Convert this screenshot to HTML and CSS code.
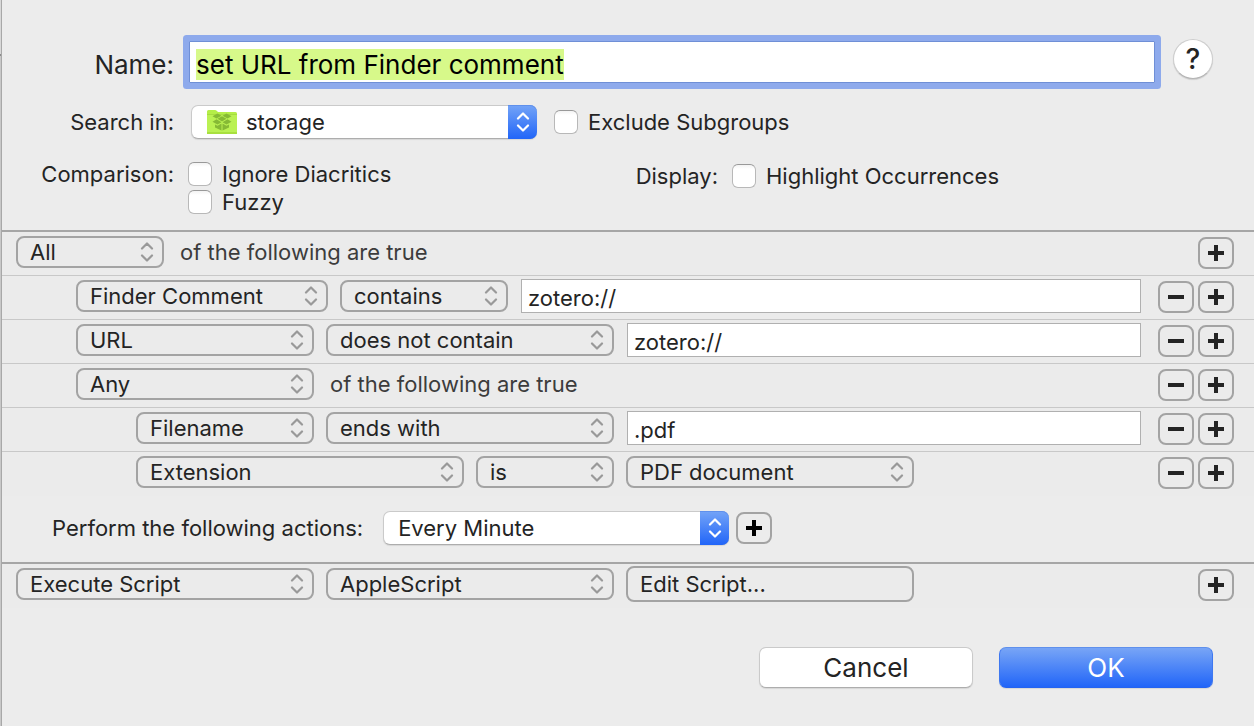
FILE: index.html
```html
<!DOCTYPE html>
<html lang="en">
<head>
<meta charset="utf-8">
<title>Smart Rule</title>
<link rel="stylesheet" href="styles.css">
</head>
<body>
<svg class="symbols" aria-hidden="true">
  <symbol id="arrows" viewBox="0 0 14 20"><path d="M2 6.500 7 1.500l5 5M2 13.500l5 5 5-5" fill="none" stroke="currentColor" stroke-width="2.200" stroke-linecap="round" stroke-linejoin="round"/></symbol>
  <symbol id="plus" viewBox="0 0 16 16"><path d="M6 0h4v6h6v4h-6v6H6v-6H0V6h6z" fill="currentColor"/></symbol>
  <symbol id="minus" viewBox="0 0 16 16"><path d="M0 6h16v4H0z" fill="currentColor"/></symbol>
</svg>
<form class="dialog">
  <section class="settings">
    <div class="line name-line">
      <label class="label label-large" for="name">Name:</label>
      <input class="name-input" id="name" type="text" value="set URL from Finder comment" autocomplete="off" spellcheck="false" autofocus>
      <button class="help" type="button" aria-label="Help">?</button>
    </div>
    <div class="line search-line">
      <label class="label" for="scope">Search in:</label>
      <div class="popup">
        <select class="popup-select has-icon" id="scope"><option>storage</option></select>
        <svg class="folder" viewBox="0 0 30 24" aria-hidden="true">
          <path d="M0 1.500Q0 0 1.500 0H8q1 0 1.700.7L11 2h17.500Q30 2 30 3.500V24H0z" fill="#b4ee48"/>
          <path d="M0 4h30v1H0z" fill="#a6dc40"/>
          <path d="M0 5h30v17H0z" fill="#baf153"/>
          <path d="M0 22h30v2H0z" fill="#a8e03f"/>
          <g fill="#86ba35">
            <path d="m10.500 3.500 4 2.200-5 2.800-4-2.300zM19.500 3.500l-4 2.200 5 2.800 4-2.300zM15 6.200l4.500 2.600L15 11.400l-4.500-2.600zM9.500 9.300l5 2.900-4 2.300-5-2.700zM20.500 9.300l-5 2.900 4 2.300 5-2.700z"/>
            <path d="m8 14.500 2.500 1.300 4-2.200v7L8 17.500zM22 14.500l-2.500 1.300-4-2.200v7l6.500-3.100z"/>
          </g>
        </svg>
        <span class="popup-cap"><svg class="arrows"><use href="#arrows"/></svg></span>
      </div>
      <label class="check"><input class="box" type="checkbox">Exclude Subgroups</label>
    </div>
    <div class="line options-line">
      <span class="label">Comparison:</span>
      <div class="options">
        <label class="check"><input class="box" type="checkbox">Ignore Diacritics</label>
        <label class="check"><input class="box" type="checkbox">Fuzzy</label>
      </div>
      <div class="display">
        <span class="display-label">Display:</span>
        <label class="check"><input class="box" type="checkbox">Highlight Occurrences</label>
      </div>
    </div>
  </section>

  <section class="rules" aria-label="Conditions">
    <div class="rule">
      <div class="select w-148"><select class="control" aria-label="Match"><option>All</option></select><svg class="arrows"><use href="#arrows"/></svg></div>
      <span class="note">of the following are true</span>
      <div class="buttons"><button class="square" type="button" aria-label="Add"><svg class="sign"><use href="#plus"/></svg></button></div>
    </div>
    <div class="rule level-1">
      <div class="select w-252"><select class="control" aria-label="Field"><option>Finder Comment</option></select><svg class="arrows"><use href="#arrows"/></svg></div>
      <div class="select w-168"><select class="control" aria-label="Operator"><option>contains</option></select><svg class="arrows"><use href="#arrows"/></svg></div>
      <input class="value" type="text" aria-label="Value" value="zotero://">
      <div class="buttons"><button class="square" type="button" aria-label="Remove"><svg class="sign"><use href="#minus"/></svg></button><button class="square" type="button" aria-label="Add"><svg class="sign"><use href="#plus"/></svg></button></div>
    </div>
    <div class="rule level-1">
      <div class="select w-238"><select class="control" aria-label="Field"><option>URL</option></select><svg class="arrows"><use href="#arrows"/></svg></div>
      <div class="select w-288"><select class="control" aria-label="Operator"><option>does not contain</option></select><svg class="arrows"><use href="#arrows"/></svg></div>
      <input class="value" type="text" aria-label="Value" value="zotero://">
      <div class="buttons"><button class="square" type="button" aria-label="Remove"><svg class="sign"><use href="#minus"/></svg></button><button class="square" type="button" aria-label="Add"><svg class="sign"><use href="#plus"/></svg></button></div>
    </div>
    <div class="rule level-1">
      <div class="select w-238"><select class="control" aria-label="Match"><option>Any</option></select><svg class="arrows"><use href="#arrows"/></svg></div>
      <span class="note">of the following are true</span>
      <div class="buttons"><button class="square" type="button" aria-label="Remove"><svg class="sign"><use href="#minus"/></svg></button><button class="square" type="button" aria-label="Add"><svg class="sign"><use href="#plus"/></svg></button></div>
    </div>
    <div class="rule level-2">
      <div class="select w-178"><select class="control" aria-label="Field"><option>Filename</option></select><svg class="arrows"><use href="#arrows"/></svg></div>
      <div class="select w-288"><select class="control" aria-label="Operator"><option>ends with</option></select><svg class="arrows"><use href="#arrows"/></svg></div>
      <input class="value" type="text" aria-label="Value" value=".pdf">
      <div class="buttons"><button class="square" type="button" aria-label="Remove"><svg class="sign"><use href="#minus"/></svg></button><button class="square" type="button" aria-label="Add"><svg class="sign"><use href="#plus"/></svg></button></div>
    </div>
    <div class="rule level-2">
      <div class="select w-328"><select class="control" aria-label="Field"><option>Extension</option></select><svg class="arrows"><use href="#arrows"/></svg></div>
      <div class="select w-138"><select class="control" aria-label="Operator"><option>is</option></select><svg class="arrows"><use href="#arrows"/></svg></div>
      <div class="select w-288"><select class="control" aria-label="Value"><option>PDF document</option></select><svg class="arrows"><use href="#arrows"/></svg></div>
      <div class="buttons"><button class="square" type="button" aria-label="Remove"><svg class="sign"><use href="#minus"/></svg></button><button class="square" type="button" aria-label="Add"><svg class="sign"><use href="#plus"/></svg></button></div>
    </div>
  </section>

  <div class="perform">
    <label class="perform-label" for="when">Perform the following actions:</label>
    <div class="popup">
      <select class="popup-select" id="when"><option>Every Minute</option></select>
      <span class="popup-cap"><svg class="arrows"><use href="#arrows"/></svg></span>
    </div>
    <button class="square square-dark" type="button" aria-label="Add trigger"><svg class="sign"><use href="#plus"/></svg></button>
  </div>

  <section class="rules" aria-label="Actions">
    <div class="rule">
      <div class="select w-298"><select class="control" aria-label="Action"><option>Execute Script</option></select><svg class="arrows"><use href="#arrows"/></svg></div>
      <div class="select w-288"><select class="control" aria-label="Script type"><option>AppleScript</option></select><svg class="arrows"><use href="#arrows"/></svg></div>
      <button class="edit w-288" type="button">Edit Script...</button>
      <div class="buttons"><button class="square" type="button" aria-label="Add"><svg class="sign"><use href="#plus"/></svg></button></div>
    </div>
  </section>

  <footer class="footer">
    <button class="push" type="button">Cancel</button>
    <button class="push push-primary" type="submit">OK</button>
  </footer>
</form>
<script src="script.js"></script>
</body>
</html>
```

FILE: styles.css
```css
*, *::before { box-sizing: border-box; }

body {
  margin: 0;
  min-height: 100vh;
  display: flex;
  background: #ececec;
  color: #242424;
  font: 22px/28px Inter, "Liberation Sans", sans-serif;
}

body::before {
  content: "";
  width: 2px;
  flex: none;
  border-right: 1px solid #a8a8a8;
  background: linear-gradient(#d8d8d8 54px, #8c8c8c 54px 56px, #c8c8c8 56px);
}

button, input, select { font: inherit; color: inherit; margin: 0; }
button, select { cursor: default; }

.symbols { display: none; }
.dialog { flex: 1; min-width: 0; }

.settings {
  padding: 35px 41px 14px 0;
  display: flex;
  flex-direction: column;
}
.line { display: flex; align-items: center; }
.label { width: 172px; flex: none; text-align: right; }
.label-large { padding-top: 6px; font-size: 26px; line-height: 34px; }

.name-line { padding-bottom: 16px; }
.name-input {
  flex: 1;
  min-width: 0;
  height: 42px;
  margin: 6px 18px 6px 15px;
  padding: 5px 6px 1px;
  border: 1px solid #6f8fd6;
  background: #fff;
  color: #000;
  font-size: 26px;
  line-height: 34px;
  outline: none;
  box-shadow: 0 0 0 6px #8eaaec;
  border-radius: 1px;
}
.name-input::selection { background: #d7f98a; color: #000; }
.help {
  width: 40px;
  height: 40px;
  padding: 0;
  margin-bottom: 6px;
  border: 1px solid #cdcdcd;
  border-bottom-color: #b4b4b4;
  border-radius: 50%;
  background: #fff;
  box-shadow: 0 1px 1px #00000022;
  font-size: 28px;
  font-weight: 500;
  line-height: 36px;
}

.search-line { padding-bottom: 21px; }
.search-line .popup { margin-left: 17px; margin-right: 17px; }

.popup {
  width: 346px;
  height: 34px;
  display: grid;
  grid-template-columns: 16px 1fr 29px;
  align-items: center;
}
.popup-select {
  grid-area: 1 / 1 / 2 / 4;
  appearance: none;
  width: 100%;
  height: 34px;
  padding: 0 40px 0 14px;
  border: 1px solid #cacaca;
  border-bottom-color: #adadad;
  border-radius: 7px;
  background: #fff;
  box-shadow: 0 1px 1px #00000018;
}
.has-icon { padding-left: 54px; }
.folder { grid-area: 1 / 2; width: 30px; height: 24px; pointer-events: none; }
.popup-cap {
  grid-area: 1 / 3;
  height: 34px;
  display: grid;
  place-items: center;
  border-radius: 0 7px 7px 0;
  background: linear-gradient(#74a4f7, #2165f8);
  box-shadow: inset 0 1px #5f90ec;
  color: #fff;
  pointer-events: none;
}
.arrows { width: 14px; height: 20px; }

.check { display: flex; align-items: center; gap: 10px; white-space: nowrap; }
.box {
  appearance: none;
  width: 24px;
  height: 24px;
  border: 1px solid #b8b8b8;
  border-top-color: #999;
  border-radius: 6px;
  background: linear-gradient(#f3f3f3, #fff 4px);
}
.box:checked { background: #3478f6; }

.options-line { align-items: flex-start; }
.options { width: 400px; margin-left: 14px; }
.display { display: flex; gap: 14px; padding-top: 2px; }
.display-label { width: 130px; text-align: right; }

.rules { border-top: 2px solid #a6a6a6; background: #ebebeb; }
.rule {
  height: 44px;
  display: flex;
  align-items: center;
  gap: 12px;
  padding: 2px 20px 5px 14px;
  border-bottom: 1px solid #c8c8c8;
}
.rule:last-child { border-bottom-color: transparent; }
.level-1 { padding-left: 74px; }
.level-2 { padding-left: 134px; }

.select { display: grid; grid-template-columns: 1fr 32px; align-items: center; }
.select .arrows { grid-area: 1 / 2; justify-self: center; margin-right: 2px; color: #999; pointer-events: none; }
.control {
  grid-area: 1 / 1 / 2 / 3;
  appearance: none;
  width: 100%;
  height: 32px;
  padding: 0 32px 0 12px;
  border: 2px solid #a3a3a3;
  border-radius: 8px;
  background: transparent;
}
.w-138 { width: 138px; }
.w-148 { width: 148px; }
.w-168 { width: 168px; }
.w-178 { width: 178px; }
.w-238 { width: 238px; }
.w-252 { width: 252px; }
.w-288 { width: 288px; }
.w-298 { width: 298px; }
.w-328 { width: 328px; }

.note { margin-left: 4px; color: #3c3c3c; }
.value {
  flex: 1;
  min-width: 0;
  height: 34px;
  margin: 0 5px 0 1px;
  padding: 4px 6px 0;
  border: 1px solid #b0b0b0;
  border-radius: 0;
  background: #fff;
}
.edit {
  height: 36px;
  padding: 0 12px;
  border: 2px solid #a3a3a3;
  border-radius: 8px;
  background: transparent;
  text-align: left;
}
.buttons { display: flex; gap: 4px; margin-left: auto; align-self: flex-end; padding-bottom: 1px; }
.square {
  width: 36px;
  height: 32px;
  padding: 0;
  display: grid;
  place-items: center;
  border: 2px solid #a3a3a3;
  border-radius: 8px;
  background: transparent;
}
.square-dark { color: #000; }
.sign { width: 16px; height: 16px; }

.perform { display: flex; align-items: center; padding: 15px 0 17px 50px; }
.perform .popup { margin: 0 7px 0 20px; }

.footer {
  display: flex;
  justify-content: flex-end;
  gap: 26px;
  padding: 39px 41px;
}
.push {
  width: 214px;
  height: 41px;
  padding: 0;
  border: 1px solid #cacaca;
  border-bottom-color: #adadad;
  border-radius: 7px;
  background: #fff;
  box-shadow: 0 1px 1px #00000018;
  font-size: 26px;
}
.push-primary {
  border-color: #5f90ec #3f78f0 #2463f0;
  background: linear-gradient(#78a5f6, #2165f8);
  color: #fff;
}
```

FILE: script.js
```js
const nameInput = document.getElementById("name");
nameInput.focus();
nameInput.select();
```
